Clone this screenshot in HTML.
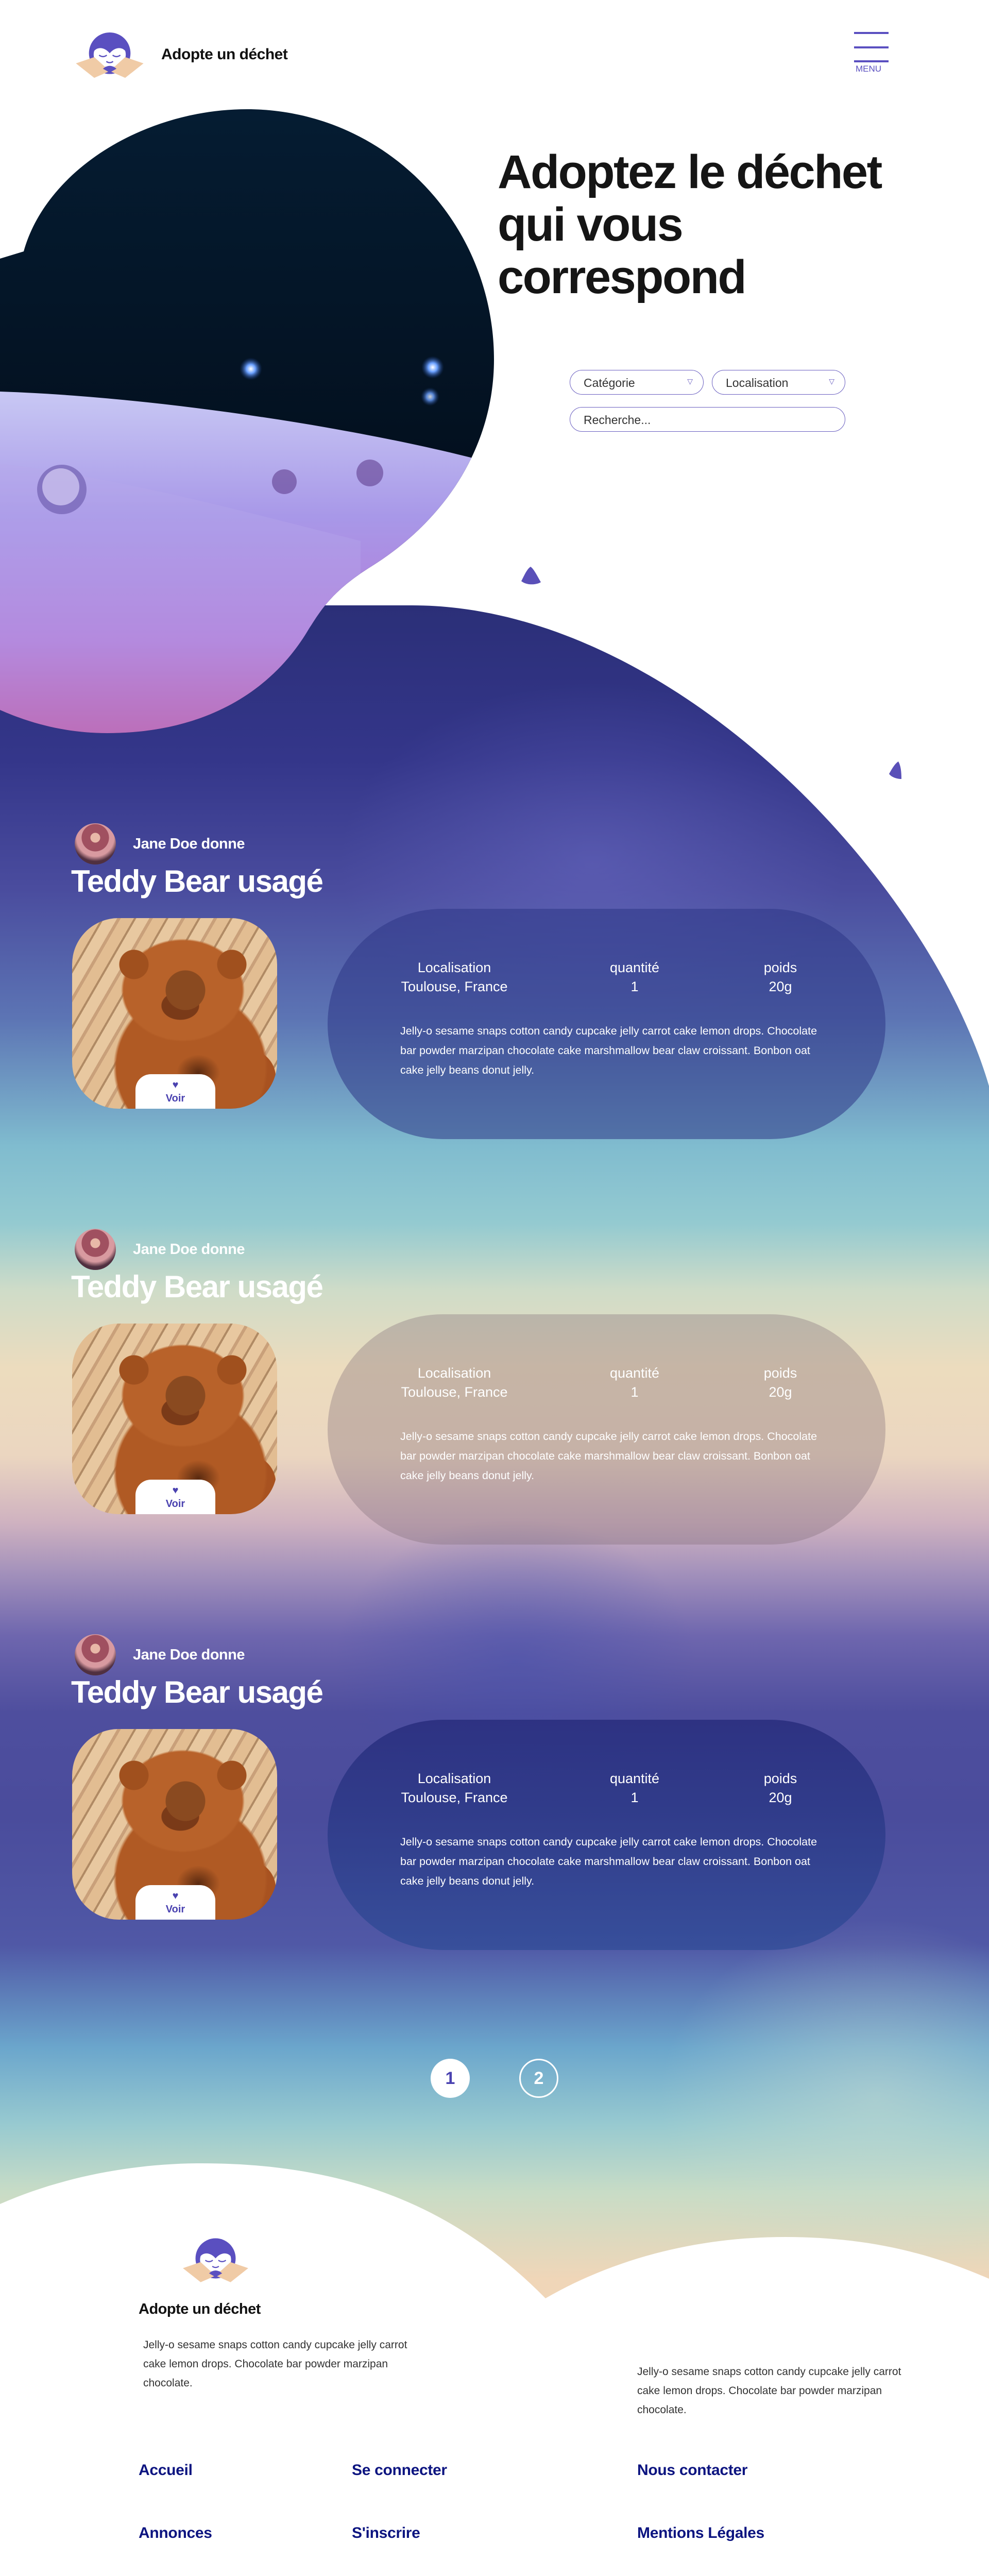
<!DOCTYPE html>
<html><head><meta charset="utf-8">
<style>
*{margin:0;padding:0;box-sizing:border-box}
html{width:1920px;height:5167px;overflow:hidden}
body{width:1920px;height:5167px;max-height:5167px;background:#fff;overflow:hidden;position:relative;font-family:"Liberation Sans",sans-serif}
.abs{position:absolute}
.brand{font-weight:bold;color:#111;font-size:30px;letter-spacing:-0.5px}
h1{position:absolute;left:966px;top:283px;font-size:92px;line-height:102px;font-weight:bold;color:#151515;letter-spacing:-2.5px;white-space:nowrap}
.sel{position:absolute;height:48px;border:1.5px solid #6a5fc0;border-radius:24px;font-size:23px;color:#333;padding:11px 26px}
.sel .tri{position:absolute;right:20px;top:13px;font-size:14px;color:#6a5fc0}
.card{position:absolute;left:0;width:1920px;height:640px}
.av{position:absolute;left:145px;top:0;width:80px;height:80px;border-radius:50%;background:radial-gradient(circle at 50% 35%,#e8b8a8 0 14%,#a05060 15% 40%,#d89aa0 41% 55%,#503040 70%)}
.giver{position:absolute;left:258px;top:24px;color:#fff;font-weight:bold;font-size:29px;letter-spacing:-0.5px}
.title{position:absolute;left:138px;top:78px;color:#fff;font-weight:bold;font-size:60px;letter-spacing:-1.5px}
.img{position:absolute;left:140px;top:184px;width:398px;height:370px;border-radius:90px;overflow:hidden;
background:
radial-gradient(ellipse 60px 50px at 245px 300px,#5a2a10,transparent 70%),
radial-gradient(circle at 220px 140px,#8a4a20 0 38px,transparent 39px),
radial-gradient(ellipse 60px 45px at 210px 170px,#7a3a18 0 60%,transparent 62%),
radial-gradient(circle at 120px 90px,#a0501e 0 28px,transparent 29px),
radial-gradient(circle at 310px 90px,#a0501e 0 28px,transparent 29px),
radial-gradient(ellipse 120px 100px at 215px 140px,#b8622a 0 96%,transparent 100%),
radial-gradient(ellipse 150px 150px at 230px 290px,#b05a24 0 96%,transparent 100%),
radial-gradient(circle at 340px 310px,#a85220 0 55px,transparent 56px),
repeating-linear-gradient(120deg,#e8c8a0 0 22px,#c9a07a 22px 28px,#e2bd92 28px 50px,#b08a64 50px 54px)}
.voir{position:absolute;left:123px;top:303px;width:155px;height:70px;background:#fff;border-radius:30px 30px 0 0;text-align:center;color:#4a42b0;font-weight:bold;font-size:20px;padding-top:8px;line-height:26px}
.pill{position:absolute;left:636px;top:166px;width:1083px;height:447px;border-radius:225px}
.col{position:absolute;top:262px;color:#fff;font-size:27px;line-height:37px;text-align:center;width:400px;margin-left:-200px}
.desc{position:absolute;left:777px;top:384px;width:830px;color:#fff;font-size:21.5px;line-height:38px}
.flink{position:absolute;color:#0c1480;font-weight:bold;font-size:30px;letter-spacing:-0.3px;white-space:nowrap}
.fp{position:absolute;color:#333;font-size:21px;line-height:37px;width:540px}
</style></head><body>

<div class="abs" style="left:0;top:1175px;width:1920px;height:3300px;
background:
radial-gradient(ellipse 700px 500px at 1150px 500px,rgba(110,110,200,0.45),transparent 70%),
radial-gradient(ellipse 500px 400px at 1000px 2050px,rgba(70,80,170,0.5),transparent 70%),
radial-gradient(ellipse 600px 500px at 1700px 2900px,rgba(200,220,210,0.5),transparent 70%),
linear-gradient(180deg,#2b2f78 0px,#34368a 300px,#4a4c9e 550px,#5c74b4 800px,#80bccf 1050px,#94cad0 1200px,#cfdcc8 1330px,#ecdcbe 1480px,#ebd6c0 1650px,#cfb2c0 1780px,#a290bb 1880px,#6e66ae 2000px,#4e4e9e 2150px,#4a4c9c 2350px,#5058a6 2600px,#6ba6cc 2800px,#98cad0 2950px,#c8dcc6 3080px,#f0d6b8 3250px)"></div>

<svg class="abs" style="left:0;top:0" width="1920" height="5167">
<path d="M0 1000 L0 1175 L800 1175 C1300 1175 1800 1700 1920 2108 L1920 1000 Z" fill="#fff"/>
<path d="M0 4278 C120 4225 260 4199 392 4199 C700 4199 900 4300 1059 4461 C1200 4380 1360 4342 1524 4342 C1700 4342 1820 4380 1920 4423 L1920 5167 L0 5167 Z" fill="#fff"/>
<path d="M1012 1128 C1020 1112 1024 1104 1030 1100 C1036 1104 1042 1116 1050 1130 C1040 1136 1022 1136 1012 1128 Z" fill="#5a50b8"/>
<path d="M1726 1502 C1734 1488 1738 1482 1744 1478 C1748 1485 1750 1495 1750 1512 C1740 1512 1730 1508 1726 1502 Z" fill="#5a50b8"/>
</svg>

<svg class="abs" style="left:0;top:0" width="1000" height="1450">
<defs>
<clipPath id="bc"><path d="M0 502 L46 488 C90 330 280 212 480 212 C745 212 959 430 959 698 C959 850 880 1000 720 1100 C640 1150 620 1190 600 1220 C530 1340 400 1423 208 1423 C120 1423 50 1400 0 1378 Z"/></clipPath>
<linearGradient id="dark" x1="0" y1="0" x2="0" y2="1"><stop offset="0" stop-color="#062038"/><stop offset="1" stop-color="#01060f"/></linearGradient>
<linearGradient id="water" x1="0" y1="0" x2="0" y2="1"><stop offset="0" stop-color="#c8c8f4"/><stop offset="0.35" stop-color="#a898e8"/><stop offset="0.7" stop-color="#b27ad8"/><stop offset="1" stop-color="#c04a98"/></linearGradient>
<radialGradient id="bub"><stop offset="0" stop-color="#fff"/><stop offset="0.4" stop-color="#6aa0ff"/><stop offset="1" stop-color="#1a3a80" stop-opacity="0"/></radialGradient>
</defs>
<g clip-path="url(#bc)">
<rect width="1000" height="1450" fill="url(#dark)"/>
<path d="M0 760 C300 770 700 830 960 900 L960 1450 L0 1450 Z" fill="url(#water)"/>
<path d="M0 900 C250 930 500 1000 700 1050 L700 1450 L0 1450Z" fill="#b8a8ec" opacity="0.35"/>
<circle cx="487" cy="716" r="22" fill="url(#bub)"/>
<circle cx="840" cy="713" r="22" fill="url(#bub)"/>
<circle cx="835" cy="770" r="18" fill="url(#bub)" opacity="0.8"/>
<circle cx="120" cy="950" r="48" fill="#7060b0" opacity="0.7"/>
<circle cx="118" cy="945" r="36" fill="#d8d0f8" opacity="0.7"/>
<circle cx="552" cy="935" r="24" fill="#604090" opacity="0.6"/>
<circle cx="718" cy="918" r="26" fill="#604090" opacity="0.6"/>
</g>
</svg>

<svg class="abs" style="left:138px;top:56px" width="150" height="104" viewBox="130 50 160 110">
<circle cx="210" cy="100" r="43" fill="#5a4fc0"/>
<path d="M178 95 C186 86 200 88 210 100 C220 88 234 86 242 95 C246 108 240 120 228 128 L192 128 C180 120 174 108 178 95Z" fill="#fff"/>
<path d="M188 104 q8 6 16 0 M216 104 q8 6 16 0 M203 117 q7 5 14 0" stroke="#5a4fc0" stroke-width="2.5" fill="none"/>
<path d="M140 121 L178 108 L210 137 L178 151 Z" fill="#f0cba6"/>
<path d="M280 121 L242 108 L210 137 L242 151 Z" fill="#f0cba6"/>
<path d="M196 132 q14 -12 28 0 L210 140Z" fill="#5a4fc0"/>
</svg>
<div class="abs brand" style="left:313px;top:89px">Adopte un déchet</div>
<div class="abs" style="left:1658px;top:62px;width:67px;height:4px;background:#5a4fc0"></div>
<div class="abs" style="left:1658px;top:90px;width:67px;height:4px;background:#5a4fc0"></div>
<div class="abs" style="left:1658px;top:117px;width:67px;height:4px;background:#5a4fc0"></div>
<div class="abs" style="left:1661px;top:124px;color:#5a4fc0;font-size:17px">MENU</div>

<h1>Adoptez le déchet<br>qui vous<br>correspond</h1>
<div class="sel" style="left:1106px;top:718px;width:260px">Catégorie<span class="tri">▽</span></div>
<div class="sel" style="left:1382px;top:718px;width:259px">Localisation<span class="tri">▽</span></div>
<div class="sel" style="left:1106px;top:790px;width:535px">Recherche...</div>

<div class="card" style="top:1598px">
<div class="av"></div><div class="giver">Jane Doe donne</div><div class="title">Teddy Bear usagé</div>
<div class="pill" style="background:rgba(45,55,135,0.55)"></div>
<div class="col" style="left:882px">Localisation<br>Toulouse, France</div>
<div class="col" style="left:1232px">quantité<br>1</div>
<div class="col" style="left:1515px">poids<br>20g</div>
<div class="desc">Jelly-o sesame snaps cotton candy cupcake jelly carrot cake lemon drops. Chocolate bar powder marzipan chocolate cake marshmallow bear claw croissant. Bonbon oat cake jelly beans donut jelly.</div>
<div class="img"><div class="voir">♥<br>Voir</div></div>
</div>

<div class="card" style="top:2385px">
<div class="av"></div><div class="giver">Jane Doe donne</div><div class="title">Teddy Bear usagé</div>
<div class="pill" style="background:rgba(130,110,120,0.35)"></div>
<div class="col" style="left:882px">Localisation<br>Toulouse, France</div>
<div class="col" style="left:1232px">quantité<br>1</div>
<div class="col" style="left:1515px">poids<br>20g</div>
<div class="desc">Jelly-o sesame snaps cotton candy cupcake jelly carrot cake lemon drops. Chocolate bar powder marzipan chocolate cake marshmallow bear claw croissant. Bonbon oat cake jelly beans donut jelly.</div>
<div class="img"><div class="voir">♥<br>Voir</div></div>
</div>

<div class="card" style="top:3172px">
<div class="av"></div><div class="giver">Jane Doe donne</div><div class="title">Teddy Bear usagé</div>
<div class="pill" style="background:linear-gradient(180deg,rgba(40,45,125,0.85),rgba(45,75,150,0.7))"></div>
<div class="col" style="left:882px">Localisation<br>Toulouse, France</div>
<div class="col" style="left:1232px">quantité<br>1</div>
<div class="col" style="left:1515px">poids<br>20g</div>
<div class="desc">Jelly-o sesame snaps cotton candy cupcake jelly carrot cake lemon drops. Chocolate bar powder marzipan chocolate cake marshmallow bear claw croissant. Bonbon oat cake jelly beans donut jelly.</div>
<div class="img"><div class="voir">♥<br>Voir</div></div>
</div>

<div class="abs" style="left:836px;top:3996px;width:76px;height:76px;border-radius:50%;background:#fff;color:#4a42b0;font-weight:bold;font-size:34px;text-align:center;line-height:76px">1</div>
<div class="abs" style="left:1008px;top:3996px;width:76px;height:76px;border-radius:50%;border:3px solid #fff;color:#fff;font-weight:bold;font-size:34px;text-align:center;line-height:70px">2</div>

<svg class="abs" style="left:346px;top:4338px" width="145" height="100" viewBox="130 50 160 110">
<circle cx="210" cy="100" r="43" fill="#5a4fc0"/>
<path d="M178 95 C186 86 200 88 210 100 C220 88 234 86 242 95 C246 108 240 120 228 128 L192 128 C180 120 174 108 178 95Z" fill="#fff"/>
<path d="M188 104 q8 6 16 0 M216 104 q8 6 16 0 M203 117 q7 5 14 0" stroke="#5a4fc0" stroke-width="2.5" fill="none"/>
<path d="M140 121 L178 108 L210 137 L178 151 Z" fill="#f0cba6"/>
<path d="M280 121 L242 108 L210 137 L242 151 Z" fill="#f0cba6"/>
<path d="M196 132 q14 -12 28 0 L210 140Z" fill="#5a4fc0"/>
</svg>
<div class="abs brand" style="left:269px;top:4466px;font-size:29px">Adopte un déchet</div>
<div class="fp" style="left:278px;top:4533px">Jelly-o sesame snaps cotton candy cupcake jelly carrot cake lemon drops. Chocolate bar powder marzipan chocolate.</div>
<div class="fp" style="left:1237px;top:4585px">Jelly-o sesame snaps cotton candy cupcake jelly carrot cake lemon drops. Chocolate bar powder marzipan chocolate.</div>
<div class="flink" style="left:269px;top:4778px">Accueil</div>
<div class="flink" style="left:683px;top:4778px">Se connecter</div>
<div class="flink" style="left:1237px;top:4778px">Nous contacter</div>
<div class="flink" style="left:269px;top:4900px">Annonces</div>
<div class="flink" style="left:683px;top:4900px">S'inscrire</div>
<div class="flink" style="left:1237px;top:4900px">Mentions Légales</div>
<div class="flink" style="left:1237px;top:5022px">Conditions d'utilisation</div>
</body></html>
